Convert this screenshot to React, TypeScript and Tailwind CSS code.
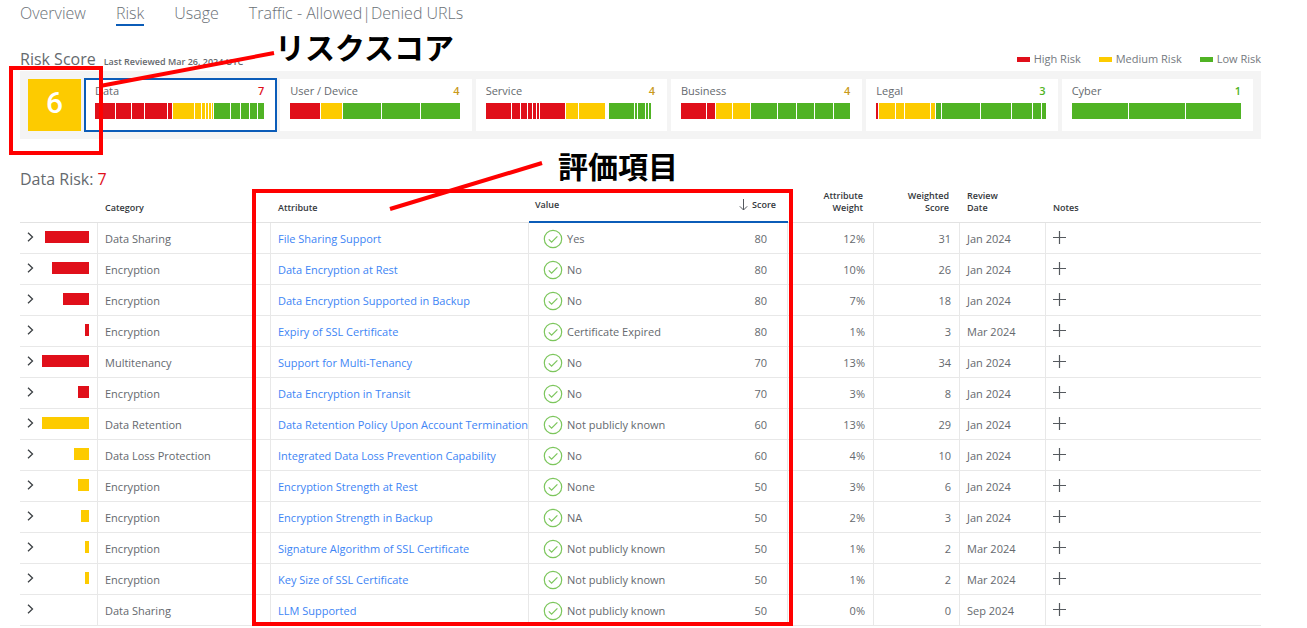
import { useState } from "react";

type Level = "high" | "medium" | "low" | "none";

interface RiskGroup {
  name: string;
  score: number;
  scoreColor: string;
  segments: [Level, number][];
}

interface RiskRow {
  bar: number;
  level: Level;
  category: string;
  attribute: string;
  value: string;
  score: number;
  weight: string;
  weighted: number;
  date: string;
}

const levelColors: Record<Level, string> = {
  high: "bg-[#e00f1a]",
  medium: "bg-[#fdcb00]",
  low: "bg-[#50b324]",
  none: "bg-transparent",
};

const groups: RiskGroup[] = [
  {
    name: "Data",
    score: 7,
    scoreColor: "text-[#e00f1a]",
    segments: [
      ["high", 20], ["high", 15], ["high", 12], ["high", 22], ["high", 4],
      ["medium", 21], ["medium", 6], ["medium", 3], ["medium", 2], ["medium", 2], ["medium", 1],
      ["low", 16], ["low", 9], ["low", 8], ["low", 7], ["low", 6],
    ],
  },
  {
    name: "User / Device",
    score: 4,
    scoreColor: "text-[#c99a1a]",
    segments: [["high", 29], ["medium", 21], ["low", 38], ["low", 38], ["low", 38]],
  },
  {
    name: "Service",
    score: 4,
    scoreColor: "text-[#c99a1a]",
    segments: [
      ["high", 25], ["high", 8], ["high", 6], ["high", 4], ["high", 3], ["high", 2], ["high", 25],
      ["medium", 12], ["medium", 26], ["none", 2],
      ["low", 25], ["low", 2], ["low", 7], ["low", 2], ["low", 2], ["none", 3],
    ],
  },
  {
    name: "Business",
    score: 4,
    scoreColor: "text-[#c99a1a]",
    segments: [
      ["high", 25], ["high", 8], ["medium", 16], ["medium", 17],
      ["low", 26], ["low", 18], ["low", 17], ["low", 18], ["low", 16],
    ],
  },
  {
    name: "Legal",
    score: 3,
    scoreColor: "text-[#50b324]",
    segments: [
      ["high", 2], ["medium", 16], ["medium", 7], ["medium", 25], ["medium", 4],
      ["low", 5], ["low", 38], ["low", 30], ["low", 19], ["low", 8], ["low", 4],
    ],
  },
  {
    name: "Cyber",
    score: 1,
    scoreColor: "text-[#50b324]",
    segments: [["low", 56], ["low", 55], ["low", 55]],
  },
];

const rows: RiskRow[] = [
  { bar: 44, level: "high", category: "Data Sharing", attribute: "File Sharing Support", value: "Yes", score: 80, weight: "12%", weighted: 31, date: "Jan 2024" },
  { bar: 37, level: "high", category: "Encryption", attribute: "Data Encryption at Rest", value: "No", score: 80, weight: "10%", weighted: 26, date: "Jan 2024" },
  { bar: 26, level: "high", category: "Encryption", attribute: "Data Encryption Supported in Backup", value: "No", score: 80, weight: "7%", weighted: 18, date: "Jan 2024" },
  { bar: 4, level: "high", category: "Encryption", attribute: "Expiry of SSL Certificate", value: "Certificate Expired", score: 80, weight: "1%", weighted: 3, date: "Mar 2024" },
  { bar: 47, level: "high", category: "Multitenancy", attribute: "Support for Multi-Tenancy", value: "No", score: 70, weight: "13%", weighted: 34, date: "Jan 2024" },
  { bar: 11, level: "high", category: "Encryption", attribute: "Data Encryption in Transit", value: "No", score: 70, weight: "3%", weighted: 8, date: "Jan 2024" },
  { bar: 47, level: "medium", category: "Data Retention", attribute: "Data Retention Policy Upon Account Termination", value: "Not publicly known", score: 60, weight: "13%", weighted: 29, date: "Jan 2024" },
  { bar: 15, level: "medium", category: "Data Loss Protection", attribute: "Integrated Data Loss Prevention Capability", value: "No", score: 60, weight: "4%", weighted: 10, date: "Jan 2024" },
  { bar: 11, level: "medium", category: "Encryption", attribute: "Encryption Strength at Rest", value: "None", score: 50, weight: "3%", weighted: 6, date: "Jan 2024" },
  { bar: 8, level: "medium", category: "Encryption", attribute: "Encryption Strength in Backup", value: "NA", score: 50, weight: "2%", weighted: 3, date: "Jan 2024" },
  { bar: 4, level: "medium", category: "Encryption", attribute: "Signature Algorithm of SSL Certificate", value: "Not publicly known", score: 50, weight: "1%", weighted: 2, date: "Mar 2024" },
  { bar: 4, level: "medium", category: "Encryption", attribute: "Key Size of SSL Certificate", value: "Not publicly known", score: 50, weight: "1%", weighted: 2, date: "Mar 2024" },
  { bar: 0, level: "none", category: "Data Sharing", attribute: "LLM Supported", value: "Not publicly known", score: 50, weight: "0%", weighted: 0, date: "Sep 2024" },
];

const legend: { label: string; level: Level }[] = [
  { label: "High Risk", level: "high" },
  { label: "Medium Risk", level: "medium" },
  { label: "Low Risk", level: "low" },
];

function CheckIcon() {
  return (
    <svg className="size-5 shrink-0" viewBox="0 0 20 20" fill="none" stroke="#7cc65c" strokeWidth="1.2">
      <circle cx="10" cy="10" r="8.7" />
      <path d="M5.8 10.4l2.8 2.8 5.8-5.8" />
    </svg>
  );
}

function Tabs() {
  return (
    <nav className="flex gap-[30px] text-base leading-[22px] font-light text-[#6b7177]">
      <a href="#overview">Overview</a>
      <a href="#risk" className="border-b-2 border-[#0b5cb8]">Risk</a>
      <a href="#usage">Usage</a>
      <a href="#traffic">Traffic - Allowed|Denied URLs</a>
    </nav>
  );
}

function Annotations() {
  return (
    <div className="pointer-events-none absolute inset-0 font-['Noto_Sans_CJK_JP',sans-serif] text-[30px] leading-8 font-bold text-black">
      <div className="absolute top-[66px] left-[9px] h-[89px] w-[94px] border-4 border-[#ff0000]" />
      <div className="absolute top-[189px] left-[252px] h-[437px] w-[541px] border-4 border-[#ff0000]" />
      <svg className="absolute top-0 left-0" width="600" height="220" stroke="#ff0000" strokeWidth="4">
        <path d="M100 86L274 53" />
        <path d="M390 209L542 163" />
      </svg>
      <span className="absolute top-[30px] left-[275px] whitespace-nowrap">リスクスコア</span>
      <span className="absolute top-[149px] left-[558px] whitespace-nowrap">評価項目</span>
    </div>
  );
}

export default function App() {
  const [selected, setSelected] = useState("Data");

  return (
    <div className="relative bg-white pt-[2px] pr-[46px] pl-5 font-['Open_Sans',sans-serif] text-[11px] text-[#65696e]">
      <Tabs />

      <div className="mt-[22px] flex h-[23px] items-baseline">
        <h1 className="text-base leading-[22px]">Risk Score</h1>
        <p className="ml-2 text-[9px] font-semibold">Last Reviewed Mar 26, 2024 UTC</p>
        <ul className="ml-auto flex gap-[18px] self-start leading-[22px] text-[#74797e]">
          {legend.map((item) => (
            <li key={item.label} className="flex items-center gap-1">
              <span className={`h-[5px] w-[13px] ${levelColors[item.level]}`} />
              {item.label}
            </li>
          ))}
        </ul>
      </div>

      <section className="flex gap-1 bg-[#f4f4f4] p-2">
        <div className="flex h-[52px] w-[53px] items-center justify-center bg-[#fdcb00] pb-1 font-[Roboto,sans-serif] text-[30px] leading-8 font-medium text-white">
          6
        </div>
        <div className="grid flex-1 grid-cols-6 gap-1">
          {groups.map((group) => (
            <button
              key={group.name}
              onClick={() => setSelected(group.name)}
              className={`bg-white pr-3 pl-[10px] text-left ${selected === group.name ? "outline-2 -outline-offset-1 outline-[#0b5cb8]" : ""}`}
            >
              <span className="flex justify-between leading-4">
                <span>{group.name}</span>
                <span className={`font-semibold ${group.scoreColor}`}>{group.score}</span>
              </span>
              <span className="mt-1 mb-2 flex h-4 gap-px">
                {group.segments.map(([level, size], i) => (
                  <span key={i} className={`basis-0 ${levelColors[level]}`} style={{ flexGrow: size }} />
                ))}
              </span>
            </button>
          ))}
        </div>
      </section>

      <h2 className="mt-[29px] text-base leading-[22px]">
        Data Risk: <span className="text-[#e00f1a]">7</span>
      </h2>

      <table className="w-full table-fixed border-separate border-spacing-0">
        <colgroup>
          <col className="w-[78px]" />
          <col className="w-[173px]" />
          <col className="w-[258px]" />
          <col className="w-[180px]" />
          <col className="w-[79px]" />
          <col className="w-[86px]" />
          <col className="w-[86px]" />
          <col className="w-[86px]" />
          <col />
        </colgroup>
        <thead className="text-[9px] leading-3 text-[#34383c]">
          <tr className="h-[33px] text-left align-bottom *:border-b *:border-[#e2e2e2] *:pb-2 *:font-semibold">
            <th />
            <th className="pl-[7px]">Category</th>
            <th className="pl-[7px]">Attribute</th>
            <th className="border-b-2! border-[#0b5cb8]! pb-[10px]! pl-[6px]">Value</th>
            <th className="border-b-2! border-[#0b5cb8]! pr-3 pb-[10px]!">
              <button className="flex w-full items-center justify-end gap-1">
                <svg width="9" height="12" viewBox="0 0 9 12" fill="none" stroke="#55595e">
                  <path d="M4.5 0v11M.8 7.3l3.7 3.7 3.7-3.7" />
                </svg>
                Score
              </button>
            </th>
            <th className="pr-[11px] text-right">Attribute<br />Weight</th>
            <th className="pr-[11px] text-right">Weighted<br />Score</th>
            <th className="pl-[7px]">Review<br />Date</th>
            <th className="pl-[7px]">Notes</th>
          </tr>
        </thead>
        <tbody>
          {rows.map((row) => (
            <tr key={row.attribute} className="h-[31px] *:border-b *:border-[#e8e8e8] *:pt-0.5">
              <td className="border-r pr-2 pb-1 pl-[7px]">
                <div className="flex items-center justify-between">
                  <button aria-label="Expand">
                    <svg width="7" height="10" viewBox="0 0 7 10" fill="none" stroke="#3c4044" strokeWidth="1.3">
                      <path d="M1 .8L5.5 5 1 9.2" />
                    </svg>
                  </button>
                  <span className={`h-3 ${levelColors[row.level]}`} style={{ width: row.bar }} />
                </div>
              </td>
              <td className="border-r pl-[7px]">{row.category}</td>
              <td className="border-r pl-[7px]">
                <a href="#attribute" className="block whitespace-nowrap text-[#4085f5]">{row.attribute}</a>
              </td>
              <td className="pl-[14px]">
                <div className="flex items-center gap-1">
                  <CheckIcon />
                  {row.value}
                </div>
              </td>
              <td className="border-r pr-5 text-right">{row.score}</td>
              <td className="border-r pr-2 text-right">{row.weight}</td>
              <td className="border-r pr-2 text-right">{row.weighted}</td>
              <td className="border-r pl-[7px]">{row.date}</td>
              <td className="pb-1 pl-[7px]">
                <button aria-label="Add note" className="block">
                  <svg width="13" height="13" viewBox="0 0 13 13" stroke="#55595e" strokeWidth="1.2">
                    <path d="M6.5 0v13M0 6.5h13" />
                  </svg>
                </button>
              </td>
            </tr>
          ))}
        </tbody>
      </table>

      <Annotations />
    </div>
  );
}
